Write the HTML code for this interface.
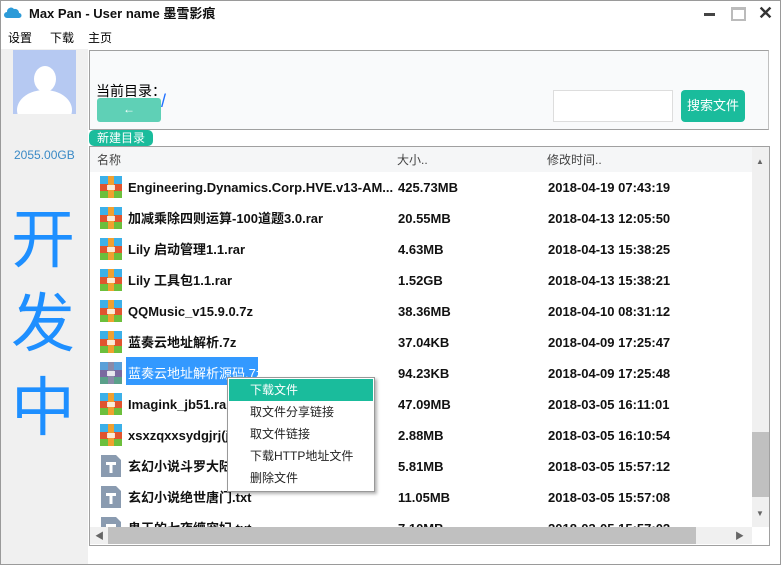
<!DOCTYPE html>
<html><head><meta charset="utf-8"><style>
*{margin:0;padding:0;box-sizing:border-box}
body{width:781px;height:565px;overflow:hidden;background:#fff;font-family:"Liberation Sans","Noto Sans CJK SC",sans-serif;position:relative}
.a{position:absolute}
.row{position:absolute;left:0;height:31px;width:660px;font-size:13px;font-weight:bold;color:#111}
.row span{position:absolute;top:7px;white-space:nowrap;line-height:17px;height:17px}
.ic{position:absolute;left:10px;top:4px;width:22px;height:22px}
.mi{position:absolute;left:22px;font-size:12px;color:#222;line-height:22px;height:22px;white-space:nowrap}
</style></head><body>
<div class="a" style="left:0;top:0;width:781px;height:565px;border:1px solid #9a9a9a"></div>
<svg class="a" style="left:4px;top:6px" width="18" height="12" viewBox="0 0 18 12"><path d="M3 12 A3 3 0 0 1 3 6 A4 4 0 0 1 10 3 A4 4 0 0 1 15 7 A2.5 2.5 0 0 1 15 12Z" fill="#2d9bd8"/></svg>
<div class="a" style="left:29px;top:5px;font-size:13px;line-height:17px;font-weight:bold;color:#111">Max Pan - User name 墨雪影痕</div>
<div class="a" style="left:704px;top:13px;width:11px;height:3px;background:#444"></div>
<div class="a" style="left:731px;top:7px;width:15px;height:14px;border:2px solid #bbb;border-top-width:3px"></div>
<div class="a" style="left:758px;top:3px;font-size:18px;line-height:20px;font-weight:bold;color:#333">✕</div>
<div class="a" style="left:8px;top:30px;font-size:12px;line-height:17px">设置</div>
<div class="a" style="left:50px;top:30px;font-size:12px;line-height:17px">下载</div>
<div class="a" style="left:88px;top:30px;font-size:12px;line-height:17px">主页</div>
<div class="a" style="left:1px;top:49px;width:87px;height:515px;background:#f0f0f0"></div>
<div class="a" style="left:13px;top:50px;width:63px;height:64px;background:#b6c9f2;overflow:hidden">
<div class="a" style="left:21px;top:16px;width:22px;height:26px;border-radius:50%;background:#fff"></div>
<div class="a" style="left:4px;top:40px;width:55px;height:40px;border-radius:50%;background:#fff"></div></div>
<div class="a" style="left:14px;top:147px;font-size:12px;line-height:16px;color:#3a8ac6">2055.00GB</div>
<div class="a" style="left:8px;top:198px;font-size:64px;line-height:84px;color:#1e8fff;width:70px;text-align:center">开<br>发<br>中</div>
<div class="a" style="left:89px;top:50px;width:680px;height:80px;background:#f9fafb;border:1px solid #a0a0a0;border-right-color:#c0c0c0"></div>
<div class="a" style="left:96px;top:81px;font-size:14px;line-height:20px">当前目录：</div>
<div class="a" style="left:97px;top:98px;width:64px;height:24px;background:#5fd0b6;border-radius:3px;color:#fff;text-align:center;font-size:12px;line-height:22px">←</div>
<div class="a" style="left:161px;top:90px;font-size:18px;line-height:22px;color:#1e6fff">/</div>
<div class="a" style="left:553px;top:90px;width:120px;height:32px;background:#fff;border:1px solid #ddd"></div>
<div class="a" style="left:681px;top:90px;width:64px;height:32px;background:#1abc9c;border-radius:4px;color:#fff;font-size:13px;text-align:center;line-height:32px">搜索文件</div>
<div class="a" style="left:89px;top:130px;width:64px;height:16px;background:#1abc9c;border-radius:5px;color:#fff;font-size:12px;text-align:center;line-height:16px">新建目录</div>
<div class="a" style="left:89px;top:146px;width:681px;height:400px;border:1px solid #a0a0a0;background:#fff;overflow:hidden">
<div class="a" style="left:0;top:0;width:662px;height:25px;background:#f5f6f7;font-size:12px;color:#444;line-height:16px">
<span class="a" style="left:7px;top:5px">名称</span><span class="a" style="left:307px;top:5px">大小..</span><span class="a" style="left:457px;top:5px">修改时间..</span></div>
<div class="a" style="left:0;top:25px;width:662px;height:355px;overflow:hidden" id="L"></div>
<div class="a" style="left:662px;top:0;width:17px;height:380px;background:#f0f0f0"><div class="a" style="left:0;top:285px;width:17px;height:65px;background:#c0c0c0"></div><div class="a" style="left:4px;top:10px;font-size:8px;color:#666">▲</div><div class="a" style="left:4px;top:362px;font-size:8px;color:#666">▼</div></div>
<div class="a" style="left:0;top:380px;width:662px;height:17px;background:#f0f0f0"><div class="a" style="left:18px;top:0;width:588px;height:17px;background:#c0c0c0"></div><div class="a" style="left:5px;top:2px;font-size:9px;color:#666">◀</div><div class="a" style="left:645px;top:2px;font-size:9px;color:#666">▶</div></div>
</div>
<div class="a" style="left:227px;top:377px;width:148px;height:115px;background:#fff;border:1px solid #999;box-shadow:2px 2px 3px rgba(0,0,0,.3)">
<div class="a" style="left:1px;top:1px;width:144px;height:22px;background:#1abc9c"></div>
<div class="mi" style="top:1px;color:#fff">下载文件</div>
<div class="mi" style="top:23px">取文件分享链接</div>
<div class="mi" style="top:45px">取文件链接</div>
<div class="mi" style="top:67px">下载HTTP地址文件</div>
<div class="mi" style="top:89px">删除文件</div>
</div>
<script>
var d=[["Engineering.Dynamics.Corp.HVE.v13-AM...","425.73MB","2018-04-19 07:43:19",0],["加减乘除四则运算-100道题3.0.rar","20.55MB","2018-04-13 12:05:50",0],["Lily 启动管理1.1.rar","4.63MB","2018-04-13 15:38:25",0],["Lily 工具包1.1.rar","1.52GB","2018-04-13 15:38:21",0],["QQMusic_v15.9.0.7z","38.36MB","2018-04-10 08:31:12",0],["蓝奏云地址解析.7z","37.04KB","2018-04-09 17:25:47",0],["蓝奏云地址解析源码.7z","94.23KB","2018-04-09 17:25:48",2],["Imagink_jb51.rar","47.09MB","2018-03-05 16:11:01",0],["xsxzqxxsydgjrj(jb51.net).rar","2.88MB","2018-03-05 16:10:54",0],["玄幻小说斗罗大陆.txt","5.81MB","2018-03-05 15:57:12",1],["玄幻小说绝世唐门.txt","11.05MB","2018-03-05 15:57:08",1],["鬼王的七夜缠宠妃.txt","7.10MB","2018-03-05 15:57:02",1]];
var h="";d.forEach(function(r,i){var t=i*31;var ic=r[3]==1?'<svg class="ic" viewBox="0 0 22 22"><path d="M1 0H16L21 5V22H1Z" fill="#8a9bb0"/><path d="M6 7H16V10H12.5V18H9.5V10H6Z" fill="#fff"/></svg>':'<svg class="ic" viewBox="0 0 22 22"><rect x="0" y="0" width="22" height="8" fill="'+(r[3]==2?'#5aa0d8':'#3cb0e8')+'"/><rect x="0" y="8" width="22" height="7" fill="'+(r[3]==2?'#7a6aa0':'#e0542e')+'"/><rect x="0" y="15" width="22" height="7" fill="'+(r[3]==2?'#5aa08a':'#6cbf3c')+'"/><rect x="8" y="0" width="6" height="22" fill="'+(r[3]==2?'#8a8aa8':'#f0a030')+'"/><rect x="7" y="9" width="8" height="5" fill="#fff" opacity=".8"/></svg>';
var sel=r[3]==2?'<div class="a" style="left:36px;top:-1px;width:132px;height:28px;background:#3399ff"></div>':'';
h+='<div class="row" style="top:'+t+'px">'+sel+ic+'<span style="left:38px;'+(r[3]==2?'color:#fff;font-weight:normal':'')+'">'+r[0]+'</span><span style="left:308px">'+r[1]+'</span><span style="left:458px">'+r[2]+'</span></div>';});
document.getElementById("L").innerHTML=h;
</script>
</body></html>
